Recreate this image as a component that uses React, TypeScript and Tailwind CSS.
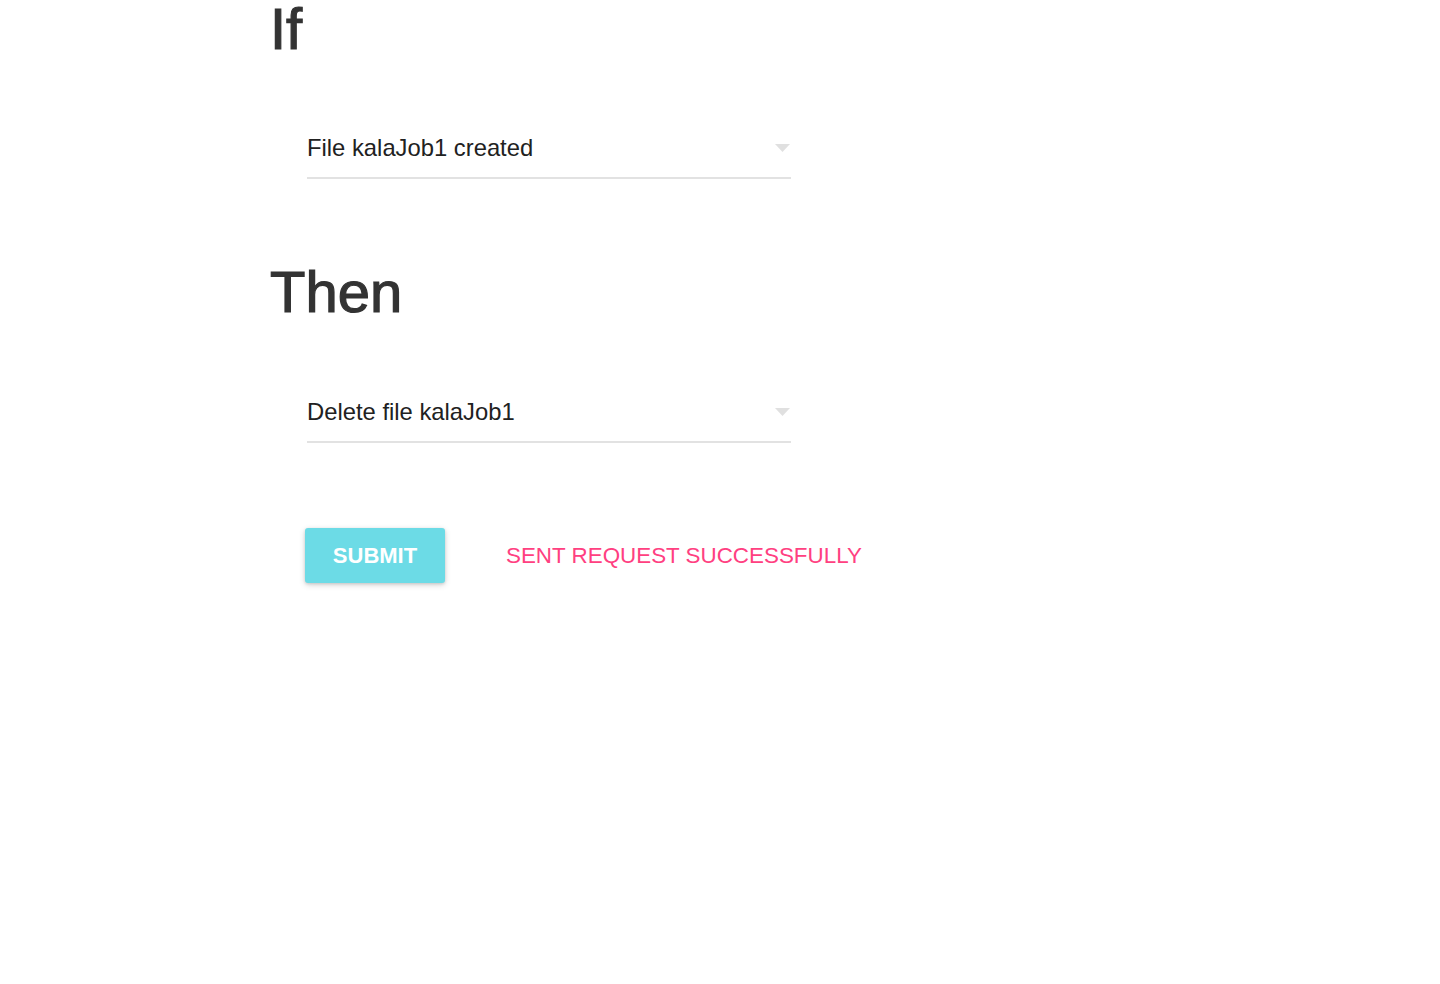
import React from 'react';

const Caret = () => (
  <svg width="15" height="8" viewBox="0 0 15 8" className="shrink-0">
    <path d="M0 0 L15 0 L7.5 8 Z" fill="#e0e0e0" />
  </svg>
);

const SelectField = ({ value }: { value: string }) => (
  <div className="ml-[37px] w-[484px]">
    <div className="flex items-center justify-between h-8 pr-[1px]">
      <span className="text-[23.8px] leading-8 text-[#212121]">{value}</span>
      <Caret />
    </div>
    <div className="mt-[13px] h-[2px] bg-[#e2e2e2]" />
  </div>
);

const App = () => {
  return (
    <div
      className="min-h-screen bg-white pl-[270px] pt-[2px]"
      style={{ fontFamily: '"Liberation Sans", Arial, sans-serif' }}
    >
      <h1 className="text-[58px] leading-[54px] text-[#333333] font-normal [-webkit-text-stroke:1.2px_#333333]">If</h1>
      <div className="mt-[76px]">
        <SelectField value="File kalaJob1 created" />
      </div>

      <h1 className="mt-[86px] text-[58px] leading-[54px] text-[#333333] font-normal [-webkit-text-stroke:1.2px_#333333]">Then</h1>
      <div className="mt-[77px]">
        <SelectField value="Delete file kalaJob1" />
      </div>

      <div className="mt-[85px] ml-[35px] flex items-center">
        <button className="w-[140px] h-[55px] rounded-[3px] bg-[#6cdbe6] text-white text-[22px] font-semibold shadow-[0_2px_6px_rgba(0,0,0,0.16),0_1px_3px_rgba(0,0,0,0.12)]">
          SUBMIT
        </button>
        <span className="ml-[61px] text-[22.4px] text-[#ff4081]">SENT REQUEST SUCCESSFULLY</span>
      </div>
    </div>
  );
};

export default App;
